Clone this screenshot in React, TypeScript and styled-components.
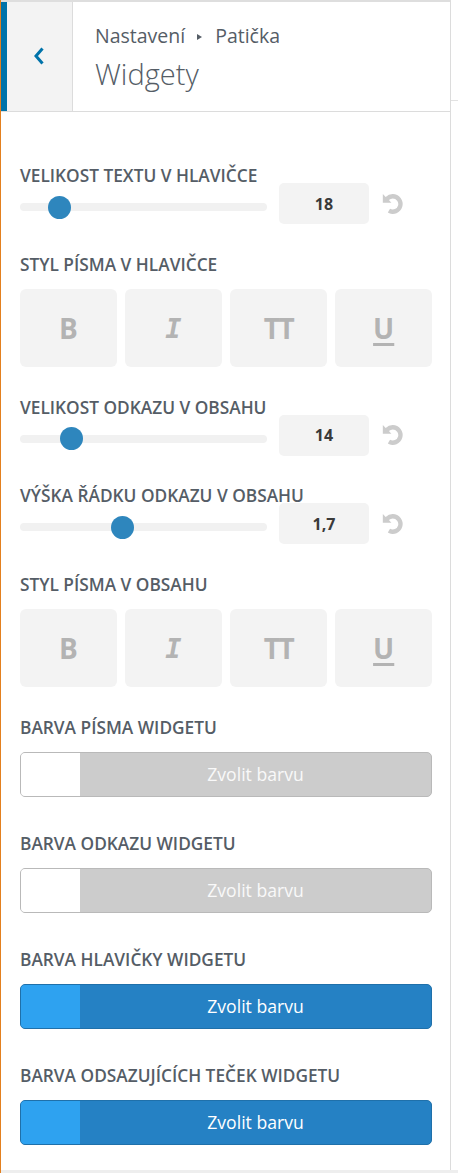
import React from "react";
import styled, { createGlobalStyle } from "styled-components";

const GlobalStyle = createGlobalStyle`
  html, body { margin: 0; padding: 0; background: #fff; }
  body { font-family: "Open Sans", "Noto Sans", sans-serif; }
  * { box-sizing: border-box; }
`;

const Root = styled.div`
  display: flex;
  flex-direction: column;
  min-height: 100vh;
  border-left: 1px solid #e3801f;
`;

const TopArea = styled.div`
  display: flex;
  align-items: stretch;
`;

const Panel = styled.div`
  width: 450px;
  border-top: 2px solid #dedede;
  border-right: 1px solid #dcdcdc;
  background: #fff;
  display: flex;
  flex-direction: column;
`;

const Gutter = styled.div`
  flex: 1;
  padding-top: 100px;
`;

const GutterLine = styled.div`
  height: 1px;
  background: #e2e2e2;
`;

const BottomBand = styled.div`
  flex: 1;
  background: #eeeeee;
`;

const Header = styled.div`
  display: flex;
  height: 110px;
  border-bottom: 1px solid #dcdcdc;
`;

const BackButton = styled.div`
  width: 72px;
  flex: none;
  background: #f3f3f3;
  border-left: 6px solid #0073aa;
  border-right: 1px solid #dcdcdc;
  display: flex;
  align-items: center;
  justify-content: center;
  padding-right: 1px;
  padding-bottom: 2px;
`;

const TitleBlock = styled.div`
  display: flex;
  flex-direction: column;
  padding: 21px 0 0 22px;
  color: #555d66;
`;

const Breadcrumb = styled.div`
  font-size: 19.5px;
  line-height: 26px;
  display: flex;
  align-items: center;
`;

const Arrow = styled.span`
  display: inline-block;
  width: 0;
  height: 0;
  border-left: 5px solid #555d66;
  border-top: 3.5px solid transparent;
  border-bottom: 3.5px solid transparent;
  margin: 1px 13px 0 12px;
`;

const Title = styled.div`
  font-size: 29px;
  font-weight: 300;
  line-height: 38px;
  margin-top: 6px;
`;

const Content = styled.div`
  display: flex;
  flex-direction: column;
  padding: 52px 18px 25.5px 19px;
`;

const Section = styled.div<{ $gap: number }>`
  display: flex;
  flex-direction: column;
  margin-bottom: ${(p) => p.$gap}px;
  &:last-child { margin-bottom: 0; }
`;

const Label = styled.div`
  font-size: 17.3px;
  font-weight: 600;
  line-height: 24px;
  color: #555d66;
  text-transform: uppercase;
  white-space: nowrap;
`;

const SliderRow = styled.div`
  display: grid;
  grid-template-columns: 1fr 90px 23px;
  column-gap: 12px;
  align-items: center;
  margin-top: -5px;
  padding-right: 28px;
`;

const TrackCell = styled.div`
  align-self: start;
  margin-top: 20px;
  position: relative;
  height: 8px;
  border-radius: 4px;
  background: #f1f1f1;
`;

const Thumb = styled.div`
  position: absolute;
  top: -7.5px;
  width: 23px;
  height: 23px;
  border-radius: 50%;
  background: #2e86bd;
`;

const ValueBox = styled.div`
  height: 41px;
  border-radius: 5px;
  background: #f3f3f3;
  display: flex;
  align-items: center;
  justify-content: center;
  font-size: 16px;
  font-weight: 700;
  color: #3a3a3a;
  position: relative;
`;

const ResetIcon = styled.svg`
  width: 23px;
  height: 22px;
  display: block;
`;

const StyleGrid = styled.div`
  display: grid;
  grid-template-columns: repeat(4, 1fr);
  column-gap: 8.5px;
  margin-top: 12.5px;
`;

const StyleButton = styled.div`
  height: 78px;
  border-radius: 6px;
  background: #f3f3f3;
  display: flex;
  align-items: center;
  justify-content: center;
  color: #b3b3b3;
`;

const Glyph = styled.span<{ $kind: string }>`
  font-family: ${(p) =>
    p.$kind === "italic" ? '"DejaVu Sans Mono", monospace' : '"Open Sans", sans-serif'};
  font-size: ${(p) => (p.$kind === "italic" ? "27px" : "28px")};
  font-weight: 700;
  font-style: ${(p) => (p.$kind === "italic" ? "italic" : "normal")};
  letter-spacing: ${(p) => (p.$kind === "caps" ? "-1.5px" : "0")};
  line-height: 1;
  ${(p) =>
    p.$kind === "underline"
      ? `text-decoration: underline; text-decoration-thickness: 2.5px; text-underline-offset: 4px;`
      : ""}
`;

const ColorButton = styled.div<{ $border: string; $main: string }>`
  margin-top: 12px;
  height: 45px;
  display: flex;
  border: 1px solid ${(p) => p.$border};
  border-radius: 5px;
  overflow: hidden;
  background: ${(p) => p.$main};
`;

const Swatch = styled.div<{ $color: string }>`
  width: 59px;
  flex: none;
  background: ${(p) => p.$color};
`;

const ColorText = styled.div<{ $color: string }>`
  flex: 1;
  display: flex;
  align-items: center;
  justify-content: center;
  font-size: 17.6px;
  color: ${(p) => p.$color};
  padding-bottom: 1px;
`;

type SectionData =
  | { type: "slider"; label: string; value: string; pos: number }
  | { type: "styles"; label: string }
  | { type: "color"; label: string; swatch: string; main: string; border: string; text: string };

const sections: SectionData[] = [
  { type: "slider", label: "Velikost textu v hlavičce", value: "18", pos: 0.127 },
  { type: "styles", label: "Styl písma v hlavičce" },
  { type: "slider", label: "Velikost odkazu v obsahu", value: "14", pos: 0.18 },
  { type: "slider", label: "Výška řádku odkazu v obsahu", value: "1,7", pos: 0.407 },
  { type: "styles", label: "Styl písma v obsahu" },
  { type: "color", label: "Barva písma widgetu", swatch: "#ffffff", main: "#cccccc", border: "#b9b9b9", text: "#f9f9f9" },
  { type: "color", label: "Barva odkazu widgetu", swatch: "#ffffff", main: "#cccccc", border: "#b9b9b9", text: "#f9f9f9" },
  { type: "color", label: "Barva hlavičky widgetu", swatch: "#2ea2f0", main: "#2581c4", border: "#1f70aa", text: "#ffffff" },
  { type: "color", label: "Barva odsazujících teček widgetu", swatch: "#2ea2f0", main: "#2581c4", border: "#1f70aa", text: "#ffffff" },
];

const ChevronLeft = () => (
  <svg width="12" height="20" viewBox="0 0 12 20" fill="none">
    <polyline points="9.5,2.5 3,10 9.5,17.5" stroke="#0073aa" strokeWidth="3" strokeLinecap="butt" strokeLinejoin="miter" />
  </svg>
);

const Reset = () => (
  <ResetIcon viewBox="0 0 20 20">
    <path
      fill="#cccccc"
      d="M10.25 1 A9 9 0 1 1 5.75 17.8 L7.75 14.33 A5 5 0 1 0 10.25 5 A5 5 0 0 0 6.72 6.47 L9 8.8 L1.2 8.8 L1.2 1 L3.8 3.6 A9 9 0 0 1 10.25 1 Z"
    />
  </ResetIcon>
);

const glyphs: { kind: string; text: string }[] = [
  { kind: "bold", text: "B" },
  { kind: "italic", text: "I" },
  { kind: "caps", text: "TT" },
  { kind: "underline", text: "U" },
];

const renderSection = (s: SectionData, i: number) => {
  const gap = s.type === "color" ? 35 : 28.5;
  if (s.type === "slider") {
    return (
      <Section key={i} $gap={gap}>
        <Label>{s.label}</Label>
        <SliderRow>
          <TrackCell>
            <Thumb style={{ left: `calc(${s.pos} * (100% - 23px))` }} />
          </TrackCell>
          <ValueBox>{s.value}</ValueBox>
          <Reset />
        </SliderRow>
      </Section>
    );
  }
  if (s.type === "styles") {
    return (
      <Section key={i} $gap={gap}>
        <Label>{s.label}</Label>
        <StyleGrid>
          {glyphs.map((g) => (
            <StyleButton key={g.kind}>
              <Glyph $kind={g.kind}>{g.text}</Glyph>
            </StyleButton>
          ))}
        </StyleGrid>
      </Section>
    );
  }
  return (
    <Section key={i} $gap={gap}>
      <Label>{s.label}</Label>
      <ColorButton $border={s.border} $main={s.main}>
        <Swatch $color={s.swatch} />
        <ColorText $color={s.text}>Zvolit barvu</ColorText>
      </ColorButton>
    </Section>
  );
};

export default function App() {
  return (
    <>
      <GlobalStyle />
      <Root>
        <TopArea>
          <Panel>
            <Header>
              <BackButton>
                <ChevronLeft />
              </BackButton>
              <TitleBlock>
                <Breadcrumb>
                  Nastavení
                  <Arrow />
                  Patička
                </Breadcrumb>
                <Title>Widgety</Title>
              </TitleBlock>
            </Header>
            <Content>{sections.map(renderSection)}</Content>
          </Panel>
          <Gutter>
            <GutterLine />
          </Gutter>
        </TopArea>
        <BottomBand />
      </Root>
    </>
  );
}
